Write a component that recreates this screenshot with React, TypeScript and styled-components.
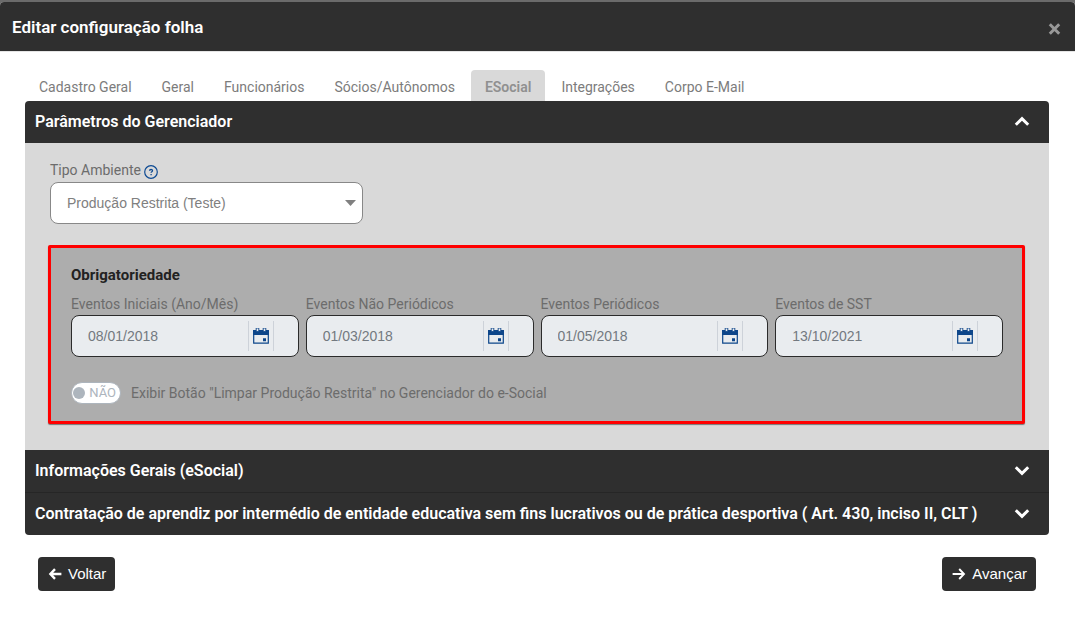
import React, { useState } from "react";
import styled, { createGlobalStyle } from "styled-components";

const dark = "#2f2f2f";
const ui = `Roboto, "Liberation Sans", sans-serif`;
const field = `"Liberation Sans", Arial, sans-serif`;

const GlobalStyle = createGlobalStyle`
  * { box-sizing: border-box; }
  body { margin: 0; background: #fff; font-family: ${ui}; font-size: 14px; line-height: 20px; color: #6c6c6c; }
  button, input, select { font: inherit; color: inherit; margin: 0; }
  h1, h2, h3 { margin: 0; }
  svg { display: block; flex: none; }
`;

const Backdrop = styled.div`
  background: #6b6b6b;
  padding-top: 2px;
`;

const Modal = styled.main`
  background: #fff;
  border-radius: 4px 4px 0 0;
  overflow: hidden;
  min-height: calc(100vh - 2px);
`;

const ModalHeader = styled.header`
  display: flex;
  align-items: center;
  justify-content: space-between;
  height: 50px;
  padding: 0 14px 0 12px;
  background: ${dark};
  border-bottom: 1px solid #e5e5e5;
`;

const ModalTitle = styled.h1`
  font-size: 17px;
  line-height: 24px;
  font-weight: 600;
  color: #fff;
`;

const CloseButton = styled.button`
  padding: 4px 0 0;
  border: 0;
  background: none;
  color: #989898;
  cursor: pointer;
`;

const Content = styled.div`
  padding: 18px 26px 24px 25px;
`;

const Tabs = styled.div`
  display: flex;
  gap: 2px;
`;

const Tab = styled.button<{ $active: boolean }>`
  height: 31px;
  padding: 3px 14px 0;
  border: 0;
  border-radius: 4px 4px 0 0;
  background: ${(p) => (p.$active ? "#d9d9d9" : "transparent")};
  color: ${(p) => (p.$active ? "#909090" : "#7c7c7c")};
  font-weight: ${(p) => (p.$active ? 600 : 400)};
  white-space: nowrap;
  cursor: pointer;
`;

const Accordion = styled.div`
  border-radius: 4px;
  overflow: hidden;
`;

const SectionHeader = styled.button`
  display: flex;
  align-items: center;
  justify-content: space-between;
  width: 100%;
  min-height: 42px;
  padding: 0 19px 0 10px;
  border: 0;
  background: ${dark};
  color: #fff;
  font-size: 16px;
  font-weight: 600;
  text-align: left;
  cursor: pointer;
`;

const SectionTitle = styled.h2<{ $divided?: boolean }>`
  font-size: 16px;
  border-top: ${(p) => (p.$divided ? "1px solid #262626" : "0")};
`;

const Panel = styled.div`
  padding: 17px 24px 26px 23px;
  background: #d9d9d9;
`;

const EnvironmentField = styled.div`
  width: 32%;
  margin-left: 2px;
`;

const LabelRow = styled.div`
  display: flex;
  align-items: flex-start;
  gap: 3px;
  height: 22px;
`;

const SelectBox = styled.div`
  position: relative;
  color: #808080;

  svg {
    position: absolute;
    right: 7px;
    top: 18px;
    pointer-events: none;
  }
`;

const Select = styled.select`
  appearance: none;
  display: block;
  width: 100%;
  height: 42px;
  padding: 0 28px 0 16px;
  border: 1px solid #888;
  border-radius: 8px;
  background: #fff;
  font-family: ${field};
`;

const HelpButton = styled.button`
  padding: 5px 0 0;
  border: 0;
  background: none;
  color: #0d4a93;
  cursor: pointer;
`;

const Group = styled.section`
  margin-top: 21px;
  padding: 17px 19px 17px 20px;
  border: 3px solid #f00;
  border-radius: 2px;
  background: #adadad;
  box-shadow: 0 1px 1px #777;
`;

const GroupTitle = styled.h3`
  font-size: 15px;
  line-height: 20px;
  font-weight: 700;
  color: #222;
`;

const DateGrid = styled.div`
  display: grid;
  grid-template-columns: repeat(4, minmax(0, 1fr));
  gap: 7px;
  margin-top: 8px;
`;

const DateLabel = styled.label`
  display: block;
  line-height: 22px;
`;

const DateBox = styled.div`
  display: flex;
  align-items: center;
  height: 42px;
  padding-right: 24px;
  border: 1px solid #2b2b2b;
  border-radius: 8px;
  background: #e9ecef;
`;

const DateInput = styled.input`
  flex: 1;
  min-width: 0;
  padding: 0 0 0 16px;
  border: 0;
  background: transparent;
  color: #737980;
  font-family: ${field};
`;

const CalendarButton = styled.button`
  height: 30px;
  padding: 0 4px;
  border: solid #cdd2d9;
  border-width: 0 1px;
  background: none;
  color: #0d468a;
`;

const SwitchRow = styled.label`
  display: flex;
  align-items: center;
  gap: 10px;
  margin-top: 25px;
  cursor: pointer;
`;

const Switch = styled.span<{ $on: boolean }>`
  position: relative;
  display: flex;
  flex-direction: ${(p) => (p.$on ? "row-reverse" : "row")};
  align-items: center;
  justify-content: space-between;
  width: 50px;
  height: 22px;
  padding: 0 4px 0 1px;
  border: 1px solid #adb5bd;
  border-radius: 11px;
  background: #fff;
  color: #adb5bd;
  font-size: 13px;

  input {
    position: absolute;
    inset: 0;
    width: 100%;
    height: 100%;
    opacity: 0;
    cursor: pointer;
  }
`;

const Knob = styled.span`
  width: 12px;
  height: 12px;
  border-radius: 50%;
  background: #adb5bd;
`;

const Footer = styled.footer`
  display: flex;
  justify-content: space-between;
  padding: 22px 13px 0;
`;

const ActionButton = styled.button`
  display: flex;
  align-items: center;
  gap: 6px;
  height: 34px;
  padding: 0 9px 0 10px;
  border: 0;
  border-radius: 4px;
  background: ${dark};
  color: #fff;
  font-family: ${field};
  font-size: 15px;
  cursor: pointer;
`;

const Chevron = ({ up = false }: { up?: boolean }) => (
  <svg width="16" height="12" viewBox="0 0 16 12" fill="none" stroke="currentColor" strokeWidth="3" aria-hidden="true">
    <path d={up ? "M1.8 8.7 8 2.6 14.2 8.7" : "M1.8 2.3 8 8.4 14.2 2.3"} />
  </svg>
);

const CalendarIcon = () => (
  <svg width="16" height="17" viewBox="0 0 16 17" aria-hidden="true">
    <path d="M.7 3v12.2h14.6V3" fill="none" stroke="currentColor" strokeWidth="1.2" />
    <path d="M0 2h16v5H0zM10 10.3h3v3h-3z" fill="currentColor" />
    <path d="M3.2 0h2.6v3.6H3.2zM10.2 0h2.6v3.6h-2.6z" fill="#e9ecef" stroke="currentColor" strokeWidth=".9" />
  </svg>
);

const Arrow = ({ back = false }: { back?: boolean }) => (
  <svg width="14" height="12" viewBox="0 0 14 12" fill="none" stroke="currentColor" strokeWidth={back ? 2.4 : 1.9} aria-hidden="true">
    <path d={back ? "M7 1.2 2.4 6 7 10.8M2.6 6h10.8" : "M7.2 1 12 6l-4.8 5M.6 6h11"} />
  </svg>
);

const tabs = ["Cadastro Geral", "Geral", "Funcionários", "Sócios/Autônomos", "ESocial", "Integrações", "Corpo E-Mail"];

const dates = [
  { id: "iniciais", label: "Eventos Iniciais (Ano/Mês)", value: "08/01/2018" },
  { id: "nao-periodicos", label: "Eventos Não Periódicos", value: "01/03/2018" },
  { id: "periodicos", label: "Eventos Periódicos", value: "01/05/2018" },
  { id: "sst", label: "Eventos de SST", value: "13/10/2021" },
];

export default function App() {
  const [active, setActive] = useState("ESocial");
  const [showClear, setShowClear] = useState(false);

  return (
    <Backdrop>
      <GlobalStyle />
      <Modal>
        <ModalHeader>
          <ModalTitle>Editar configuração folha</ModalTitle>
          <CloseButton type="button" aria-label="Fechar">
            <svg width="13" height="12" viewBox="0 0 13 12" fill="none" stroke="currentColor" strokeWidth="3">
              <path d="m1.8 1.3 9.4 9.4M11.2 1.3l-9.4 9.4" />
            </svg>
          </CloseButton>
        </ModalHeader>
        <Content>
          <Tabs role="tablist">
            {tabs.map((t) => (
              <Tab key={t} type="button" role="tab" aria-selected={t === active} $active={t === active} onClick={() => setActive(t)}>
                {t}
              </Tab>
            ))}
          </Tabs>
          <Accordion>
            <SectionTitle>
              <SectionHeader type="button" aria-expanded="true">
                Parâmetros do Gerenciador
                <Chevron up />
              </SectionHeader>
            </SectionTitle>
            <Panel>
              <EnvironmentField>
                <LabelRow>
                  <label htmlFor="ambiente">Tipo Ambiente</label>
                  <HelpButton type="button" aria-label="Ajuda">
                    <svg width="14" height="14" viewBox="0 0 14 14" fill="none" stroke="currentColor">
                      <circle cx="7" cy="7" r="6.3" strokeWidth="1.2" />
                      <path d="M5.5 5.8c.1-1.8 3.1-1.7 3 0 0 .9-1.4 .9-1.4 2M7.1 8.9v1.3" strokeWidth="1.3" />
                    </svg>
                  </HelpButton>
                </LabelRow>
                <SelectBox>
                  <Select id="ambiente" defaultValue="teste">
                    <option value="teste">Produção Restrita (Teste)</option>
                  </Select>
                  <svg width="11" height="6" viewBox="0 0 11 6" fill="currentColor" aria-hidden="true">
                    <path d="M0 0h11L5.5 6z" />
                  </svg>
                </SelectBox>
              </EnvironmentField>
              <Group>
                <GroupTitle>Obrigatoriedade</GroupTitle>
                <DateGrid>
                  {dates.map((d) => (
                    <div key={d.id}>
                      <DateLabel htmlFor={d.id}>{d.label}</DateLabel>
                      <DateBox>
                        <DateInput id={d.id} type="text" readOnly value={d.value} />
                        <CalendarButton type="button" aria-label={`Calendário: ${d.label}`}>
                          <CalendarIcon />
                        </CalendarButton>
                      </DateBox>
                    </div>
                  ))}
                </DateGrid>
                <SwitchRow>
                  <Switch $on={showClear}>
                    <Knob />
                    {showClear ? "SIM" : "NÃO"}
                    <input type="checkbox" checked={showClear} onChange={(e) => setShowClear(e.target.checked)} />
                  </Switch>
                  Exibir Botão "Limpar Produção Restrita" no Gerenciador do e-Social
                </SwitchRow>
              </Group>
            </Panel>
            <SectionTitle>
              <SectionHeader type="button" aria-expanded="false">
                Informações Gerais (eSocial)
                <Chevron />
              </SectionHeader>
            </SectionTitle>
            <SectionTitle $divided>
              <SectionHeader type="button" aria-expanded="false">
                Contratação de aprendiz por intermédio de entidade educativa sem fins lucrativos ou de prática desportiva ( Art. 430, inciso II, CLT )
                <Chevron />
              </SectionHeader>
            </SectionTitle>
          </Accordion>
          <Footer>
            <ActionButton type="button">
              <Arrow back />
              Voltar
            </ActionButton>
            <ActionButton type="button">
              <Arrow />
              Avançar
            </ActionButton>
          </Footer>
        </Content>
      </Modal>
    </Backdrop>
  );
}
